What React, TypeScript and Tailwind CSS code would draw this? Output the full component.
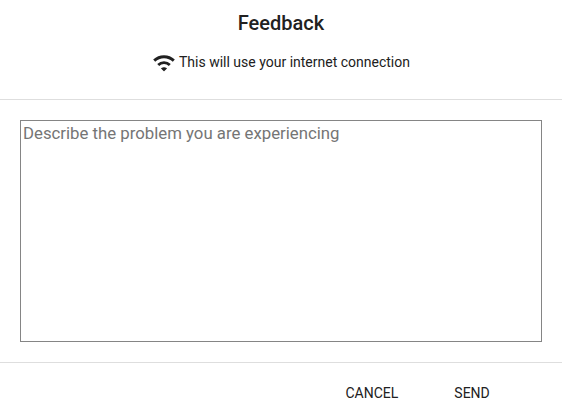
export default function App() {
  return (
    <div className="flex h-[405px] w-[562px] flex-col overflow-hidden bg-white font-['Roboto',sans-serif] text-[#212121]">
      <header className="flex h-[100px] shrink-0 flex-col items-center border-b border-[#dedede] pt-2">
        <h1 className="text-[20px] leading-[30px] font-medium">Feedback</h1>
        <div className="mt-[12px] flex h-6 items-center gap-[3.5px] pr-[0.5px]">
          <svg className="size-6" viewBox="0 0 24 24" fill="none" stroke="currentColor" aria-hidden="true">
            <path d="M2.2 10.6A14.2 14.2 0 0 1 21.8 10.6" strokeWidth="2.9" />
            <path d="M6.2 15A8.4 8.4 0 0 1 17.8 15" strokeWidth="2.8" />
            <path d="M9.7 18.4Q12 17.1 14.3 18.4L12 20.5Z" fill="currentColor" strokeWidth="1.2" strokeLinejoin="round" />
          </svg>
          <span className="text-[14px] leading-5">This will use your internet connection</span>
        </div>
      </header>
      <main className="h-[263px] shrink-0 border-b border-[#dedede] p-5">
        <textarea
          className="block h-[222px] w-full resize-none border border-[#858585] bg-white p-0.5 text-[16.77px] leading-[21px] outline-none placeholder:text-[#757575]"
          placeholder="Describe the problem you are experiencing"
        />
      </main>
      <footer className="flex shrink-0 pt-5 pl-[345.5px] text-[14px] leading-5">
        <button className="mr-14">CANCEL</button>
        <button>SEND</button>
      </footer>
    </div>
  );
}
